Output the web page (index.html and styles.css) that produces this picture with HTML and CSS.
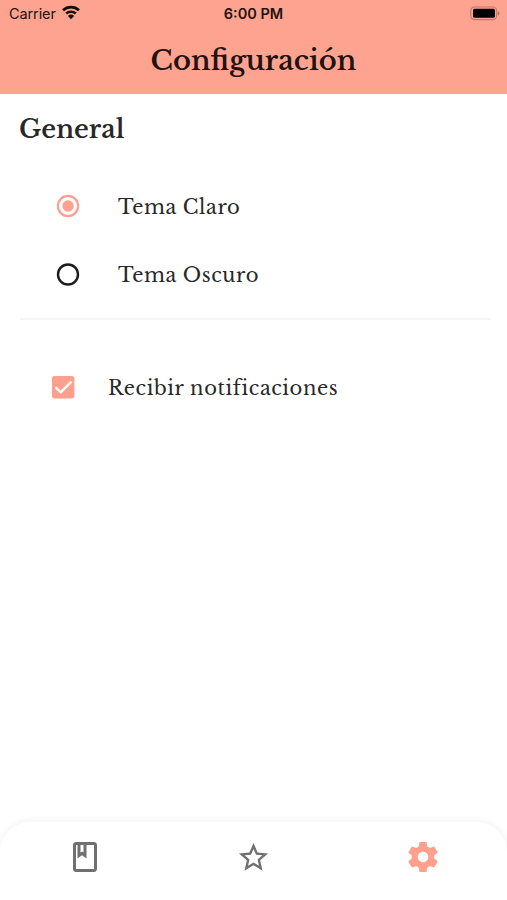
FILE: index.html
```html
<!DOCTYPE html>
<html lang="es">
<head>
<meta charset="utf-8">
<title>Configuración</title>
<link rel="stylesheet" href="styles.css">
</head>
<body>
<header class="header">
  <div class="status">
    <div class="carrier"><span>Carrier</span>
      <svg class="wifi" viewBox="0 0 20 15"><path d="M2 5.2a12 12 0 0 1 16 0M5.2 8.6a7.2 7.2 0 0 1 9.6 0" fill="none" stroke="#160d0b" stroke-width="2.7"/><path d="M10 14.2 6.9 11a4.6 4.6 0 0 1 6.2 0z" fill="#160d0b"/></svg>
    </div>
    <div class="time">6:00 PM</div>
    <svg class="battery" viewBox="0 0 31 15"><rect x="1.800" y="1" width="25.800" height="12.600" rx="3.600" fill="none" stroke="#bd7b6d" stroke-width="1.200"/><rect x="4" y="2.800" width="22" height="9" rx="1.600" fill="#000"/><path d="M28.800 5.200c2.200.5 2.200 3.700 0 4.200z" fill="#ad7063"/></svg>
  </div>
  <h1 class="title">Configuración</h1>
</header>
<main class="main">
  <h2 class="section">General</h2>
  <div class="themes">
    <label class="row">
      <svg class="control" viewBox="0 0 24 24"><circle cx="12" cy="12" r="10.1" fill="none" stroke="#ffa08e" stroke-width="2.2"/><circle cx="12" cy="12" r="5.7" fill="#ffa08e"/></svg>
      <span>Tema Claro</span>
    </label>
    <label class="row">
      <svg class="control" viewBox="0 0 24 24"><circle cx="12" cy="12.500" r="10" fill="none" stroke="#1c1c1c" stroke-width="2.4"/></svg>
      <span>Tema Oscuro</span>
    </label>
  </div>
  <label class="row notify">
    <svg class="control" viewBox="0 0 24 24"><rect x="1" y="1" width="22.4" height="22.4" rx="2.6" fill="#ffa08e"/><path d="m4.5 12.2 5.2 5.2L20.5 6.7" fill="none" stroke="#fff" stroke-width="2.4"/></svg>
    <span>Recibir notificaciones</span>
  </label>
</main>
<nav class="tabs">
  <a class="tab"><svg class="icon" viewBox="0 0 24 24"><path d="M18 2H6c-1.100 0-2 .9-2 2v16c0 1.100.9 2 2 2h12c1.100 0 2-.9 2-2V4c0-1.100-.9-2-2-2zM9 4h2v5l-1-.75L9 9V4zm9 16H6V4h1v9l3-2.250L13 13V4h5v16z"/></svg></a>
  <a class="tab"><svg class="icon star" viewBox="0 0 24 24"><path d="M22 9.240l-7.190-.620L12 2 9.190 8.630 2 9.240l5.460 4.730L5.820 21 12 17.270 18.180 21l-1.630-7.030L22 9.240zM12 15.400l-3.760 2.270 1-4.280-3.320-2.880 4.380-.380L12 6.100l1.710 4.040 4.380.380-3.320 2.880 1 4.280L12 15.400z"/></svg></a>
  <a class="tab active"><svg class="icon" viewBox="0 0 24 24"><path d="M19.430 12.980c.040-.320.070-.640.070-.980s-.030-.660-.070-.980l2.110-1.650c.190-.150.240-.420.120-.640l-2-3.460c-.120-.220-.390-.300-.610-.220l-2.490 1c-.520-.400-1.080-.730-1.690-.980l-.380-2.650C14.460 2.180 14.250 2 14 2h-4c-.250 0-.460.180-.490.420l-.380 2.650c-.610.250-1.170.590-1.690.980l-2.490-1c-.230-.090-.490 0-.610.220l-2 3.460c-.130.220-.070.490.120.640l2.110 1.650c-.040.320-.070.650-.070.980s.030.660.070.980l-2.110 1.650c-.190.150-.240.420-.120.640l2 3.460c.120.220.390.300.610.220l2.490-1c.520.400 1.080.730 1.690.980l.380 2.650c.030.240.240.420.490.420h4c.250 0 .460-.180.490-.420l.380-2.650c.610-.250 1.170-.590 1.690-.980l2.490 1c.230.090.490 0 .610-.220l2-3.460c.120-.220.070-.490-.120-.640l-2.110-1.650zM12 15.500c-1.930 0-3.500-1.570-3.500-3.500s1.570-3.500 3.500-3.500 3.500 1.570 3.500 3.500-1.570 3.500-3.500 3.500z"/></svg></a>
</nav>
</body>
</html>
```
FILE: styles.css
```css
* { box-sizing: border-box; }
body {
  margin: 0;
  height: 900px;
  display: flex;
  flex-direction: column;
  background: #fff;
  color: #282828;
  font-family: "Libre Baskerville", "Liberation Serif", serif;
  overflow: hidden;
}
.header { height: 94px; background: #ffa391; }
.status {
  height: 27px;
  padding: 0 7px 0 9px;
  display: grid;
  grid-template-columns: 1fr auto 1fr;
  align-items: center;
  color: #21130f;
  font: 14.5px/27px Inter, sans-serif;
}
.carrier { display: flex; align-items: center; gap: 5px; letter-spacing: -0.1px; }
.wifi { width: 20px; height: 15px; margin-top: -2px; }
.time { margin-right: 2px; font-weight: 600; font-size: 14.5px; }
.battery { width: 31px; height: 15px; justify-self: end; }
.title {
  margin: 0;
  color: #21130f;
  text-align: center;
  font-size: 27.4px;
  font-weight: 600;
  line-height: 66px;
}
.main { flex: 1; padding: 0 16px 0 19px; }
.section { margin: 0; padding-top: 1px; font-size: 25.4px; font-weight: 600; line-height: 69px; }
.themes {
  height: 156px;
  margin-left: 1px;
  padding: 8px 0 0 36px;
  border-bottom: 2px solid #f5f5f5;
}
.row { display: flex; align-items: center; gap: 38px; height: 68px; font-size: 19.5px; letter-spacing: 0.6px; }
.control { width: 24px; height: 24px; flex: none; overflow: visible; }
.notify { margin: 33px 0 0 32px; gap: 33px; }
.row span { padding-top: 1px; white-space: nowrap; }
.tabs {
  height: 78px;
  display: grid;
  grid-template-columns: repeat(3, 1fr);
  padding-bottom: 8px;
  border-radius: 30px 30px 0 0;
  background: #fff;
  box-shadow: 0 -2px 6px 1px rgba(0, 0, 0, 0.04);
}
.tab { display: flex; align-items: center; justify-content: center; color: #707070; }
.active { color: #ffa08e; }
.icon { width: 36px; height: 36px; fill: currentColor; }
.star { width: 35px; height: 35px; }
```
